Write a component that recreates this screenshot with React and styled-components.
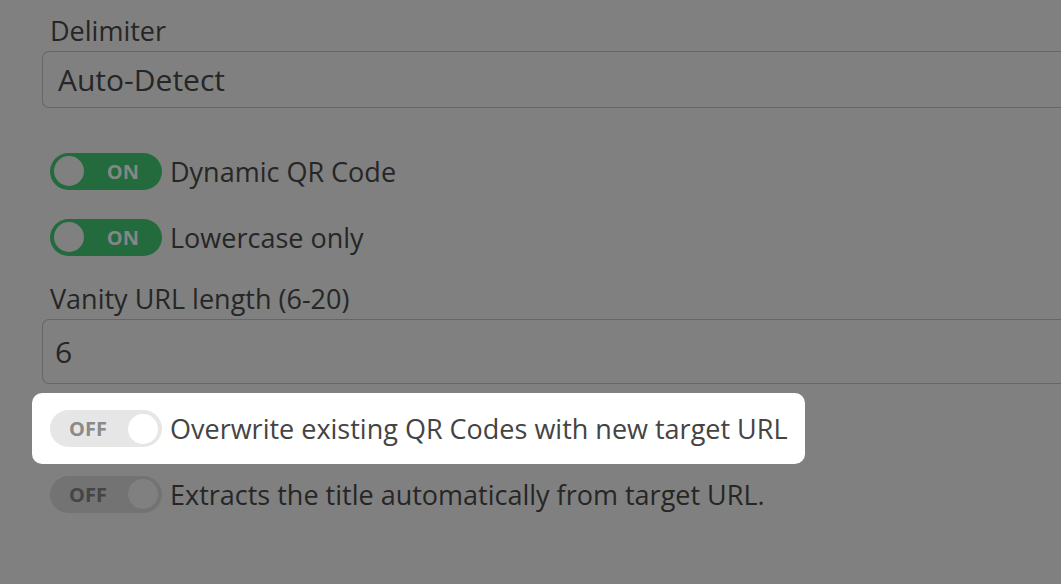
import styled, { createGlobalStyle } from "styled-components";

const Global = createGlobalStyle`
  html, body {
    margin: 0;
    padding: 0;
    background: #808080;
    overflow: hidden;
  }
  body {
    font-family: "Open Sans", "DejaVu Sans", sans-serif;
    color: #262626;
  }
`;

const Page = styled.div`
  width: 1061px;
  height: 584px;
  padding-left: 42px;
  box-sizing: border-box;
  display: flex;
  flex-direction: column;
`;

const Label = styled.div`
  font-size: 27px;
  line-height: 36px;
  margin: ${(p) => p.$margin || "0"};
  padding-left: 8px;
`;

const Input = styled.div`
  height: ${(p) => p.$height}px;
  box-sizing: border-box;
  border: 1px solid #666;
  border-right: none;
  border-radius: 7px 0 0 7px;
  display: flex;
  align-items: center;
  padding-left: ${(p) => p.$pad || 15}px;
  font-size: 30px;
  margin-right: -20px;
`;

const Spacer = styled.div`
  height: ${(p) => p.$h}px;
`;

const Row = styled.div`
  display: flex;
  align-items: center;
  gap: 8px;
  height: ${(p) => (p.$highlight ? 71 : 66)}px;
  margin: ${(p) => (p.$highlight ? "-2px 0 -3px -10px" : "0")};
  padding: ${(p) => (p.$highlight ? "0 17px 0 18px" : "0 0 0 8px")};
  width: fit-content;
  background: ${(p) => (p.$highlight ? "#fff" : "transparent")};
  border-radius: 10px;
  font-size: 27px;
  color: ${(p) => (p.$highlight ? "#444" : "#262626")};
`;

const Track = styled.div`
  width: 112px;
  height: 37px;
  border-radius: 19px;
  box-sizing: border-box;
  display: flex;
  align-items: center;
  flex-direction: ${(p) => (p.$on ? "row" : "row-reverse")};
  justify-content: space-between;
  padding: 0 4px;
  background: ${(p) => p.$bg};
`;

const Knob = styled.div`
  width: 30px;
  height: 30px;
  border-radius: 50%;
  background: ${(p) => p.$bg};
`;

const TrackText = styled.span`
  font-family: "Open Sans", sans-serif;
  font-weight: 700;
  font-size: 20px;
  color: ${(p) => p.$color};
  margin: ${(p) => (p.$on ? "0 19px 0 0" : "0 0 0 15px")};
`;

const themes = {
  on: { track: "#236b3d", knob: "#808080", text: "#868686" },
  off: { track: "#e6e6e6", knob: "#ffffff", text: "#8a8a8a" },
  offDim: { track: "#737373", knob: "#808080", text: "#454545" },
};

const Toggle = ({ on, variant }) => {
  const t = themes[variant];
  return (
    <Track $on={on} $bg={t.track}>
      <Knob $bg={t.knob} />
      <TrackText $on={on} $color={t.text}>
        {on ? "ON" : "OFF"}
      </TrackText>
    </Track>
  );
};

export default function App() {
  return (
    <>
      <Global />
      <Page>
        <Label $margin="13px 0 2px">Delimiter</Label>
        <Input $height={57} $pad={15}>Auto-Detect</Input>
        <Spacer $h={30} />
        <Row>
          <Toggle on variant="on" />
          Dynamic QR Code
        </Row>
        <Row>
          <Toggle on variant="on" />
          Lowercase only
        </Row>
        <Label $margin="11px 0 2px">Vanity URL length (6-20)</Label>
        <Input $height={65} $pad={12}>6</Input>
        <Spacer $h={11} />
        <Row $highlight>
          <Toggle variant="off" />
          Overwrite existing QR Codes with new target URL
        </Row>
        <Row>
          <Toggle variant="offDim" />
          Extracts the title automatically from target URL.
        </Row>
      </Page>
    </>
  );
}
